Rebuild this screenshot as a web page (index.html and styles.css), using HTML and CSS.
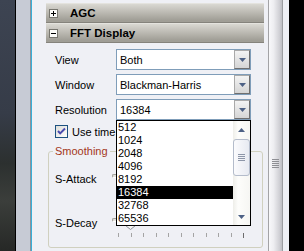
FILE: index.html
```html
<!DOCTYPE html>
<html lang="en">
<head>
    <meta charset="UTF-8">
    <title>FFT Display</title>
    <link rel="stylesheet" href="styles.css">
</head>
<body>
    <div class="screen">
        <div class="desktop"></div>
        <div class="frame"></div>

        <div class="panel">
            <div class="content">
                <div class="section">
                    <svg class="toggle" width="9" height="9" viewBox="0 0 9 9"><rect x=".5" y=".5" width="8" height="8" fill="#fbfbf9" stroke="#77766f"/><path d="M2 4.5h5M4.5 2v5" stroke="#000"/></svg>
                    AGC
                </div>
                <div class="section">
                    <svg class="toggle" width="9" height="9" viewBox="0 0 9 9"><rect x=".5" y=".5" width="8" height="8" fill="#fbfbf9" stroke="#77766f"/><path d="M2 4.5h5" stroke="#000"/></svg>
                    FFT Display
                </div>

                <div class="form">
                    <div class="row">
                        <label>View</label>
                        <div class="combo"><span>Both</span><span class="combo-btn"><svg width="7" height="4" viewBox="0 0 7 4"><path d="M0 0h7L3.5 4z" fill="#4d6185"/></svg></span></div>
                    </div>
                    <div class="row">
                        <label>Window</label>
                        <div class="combo"><span>Blackman-Harris</span><span class="combo-btn"><svg width="7" height="4" viewBox="0 0 7 4"><path d="M0 0h7L3.5 4z" fill="#4d6185"/></svg></span></div>
                    </div>
                    <div class="row">
                        <label>Resolution</label>
                        <div class="combo"><span>16384</span><span class="combo-btn"><svg width="7" height="4" viewBox="0 0 7 4"><path d="M0 0h7L3.5 4z" fill="#4d6185"/></svg></span></div>
                    </div>

                    <div class="check">
                        <svg width="13" height="13" viewBox="0 0 13 13"><defs><linearGradient id="cb" x1="0" y1="0" x2="1" y2="1"><stop offset="0" stop-color="#dcdcd7"/><stop offset="1" stop-color="#fff"/></linearGradient></defs><rect x=".5" y=".5" width="12" height="12" fill="url(#cb)" stroke="#1c5180"/><path d="M3 6l2.2 2.4L10 3.5" fill="none" stroke="#4a4aae" stroke-width="2"/></svg>
                        <span>Use time</span>
                    </div>

                    <fieldset class="group">
                        <legend>Smoothing</legend>
                        <div class="slider-row">
                            <label>S-Attack</label>
                            <div class="slider">
                                <div class="track"></div>
                                <svg class="thumb" style="left: 60px;" width="11" height="11" viewBox="0 0 11 11"><path d="M.5.5h10v6l-5 4-5-4z" fill="#f7f7f4" stroke="#8c919b"/></svg>
                                <div class="ticks"><i></i><i></i><i></i><i></i><i></i><i></i><i></i><i></i><i></i><i></i><i></i></div>
                            </div>
                        </div>
                        <div class="slider-row">
                            <label>S-Decay</label>
                            <div class="slider">
                                <div class="track"></div>
                                <svg class="thumb" style="left: 13px;" width="11" height="11" viewBox="0 0 11 11"><path d="M.5.5h10v6l-5 4-5-4z" fill="#f7f7f4" stroke="#8c919b"/></svg>
                                <div class="ticks"><i></i><i></i><i></i><i></i><i></i><i></i><i></i><i></i><i></i><i></i><i></i></div>
                            </div>
                        </div>
                    </fieldset>
                </div>

                <!-- open list of the Resolution combo -->
                <div class="dropdown">
                    <div class="options">
                        <div class="opt">512</div>
                        <div class="opt">1024</div>
                        <div class="opt">2048</div>
                        <div class="opt">4096</div>
                        <div class="opt">8192</div>
                        <div class="opt selected">16384</div>
                        <div class="opt">32768</div>
                        <div class="opt">65536</div>
                    </div>
                    <div class="list-scroll">
                        <div class="arrow-btn"><svg width="7" height="4" viewBox="0 0 7 4"><path d="M0 4h7L3.5 0z" fill="#4d6185"/></svg></div>
                        <div class="list-thumb"><i></i><i></i><i></i><i></i></div>
                        <div class="arrow-btn bottom"><svg width="7" height="4" viewBox="0 0 7 4"><path d="M0 0h7L3.5 4z" fill="#4d6185"/></svg></div>
                    </div>
                </div>
            </div>

            <div class="vscroll">
                <div class="grip"><i></i><i></i><i></i><i></i><i></i></div>
            </div>
        </div>

        <div class="outside"></div>
    </div>
</body>
</html>
```

FILE: styles.css
```css
* {
    box-sizing: border-box;
}
body {
    margin: 0;
    width: 304px;
    height: 251px;
    overflow: hidden;
    background-color: #000;
    font-family: 'Liberation Sans', Arial, sans-serif;
    font-size: 11px;
    color: #000;
}
.screen {
    display: flex;
    height: 251px;
}
.desktop {
    width: 15px;
    background: linear-gradient(#3d4452, #363c48 45%, #2c302f 65%, #3b3e3b 80%, #262826);
}
.frame {
    width: 16px;
    background-color: #c7cbd5;
    border-left: 1px solid #000;
    border-right: 1px solid #8d929c;
}
.panel {
    width: 258px;
    display: flex;
    background-color: #eff0f5;
    border-left: 1px solid #38afd8;
    padding-right: 6px;
}
.content {
    position: relative;
    width: 236px;
    padding: 3px 4px 0 14px;
}

/* collapsible section headers */
.section {
    display: flex;
    align-items: center;
    height: 20px;
    padding-left: 3px;
    border-top: 1px solid #e4e3de;
    border-bottom: 1px solid #85837c;
    background: linear-gradient(#d9d8d2, #c0beb7 40%, #a09e96 90%);
    font-weight: bold;
    font-size: 11.5px;
}
.toggle {
    margin-right: 12px;
}

/* form rows */
.form {
    padding-top: 6px;
}
.row {
    display: flex;
    align-items: center;
    height: 21px;
    margin-bottom: 4px;
    padding-left: 9px;
}
.row label {
    width: 61px;
}
.combo {
    display: flex;
    align-items: center;
    width: 135px;
    height: 21px;
    padding-left: 3px;
    border: 1px solid #7f9db9;
    background-color: #fff;
}
.combo-btn {
    display: flex;
    align-items: center;
    justify-content: center;
    width: 16px;
    height: 19px;
    margin-left: auto;
    border: 1px solid;
    border-color: #a9a9a9 #6f6f6f #6f6f6f #a9a9a9;
    background: linear-gradient(#f3f3f3, #d5d5d5);
}
.check {
    display: flex;
    align-items: center;
    gap: 4px;
    height: 13px;
    margin: 5px 0 0 9px;
    white-space: nowrap;
}

/* smoothing group */
.group {
    margin: 7px 1px 0 2px;
    padding: 0 0 0 4px;
    min-width: 0;
    border: 1px solid #d0d0bf;
    border-radius: 3px;
}
.group legend {
    padding: 0 2px;
    line-height: 13px;
    color: #a3361a;
}
.slider-row {
    display: flex;
    height: 44px;
    padding-left: 2px;
}
.slider-row:first-of-type {
    margin-top: 1px;
}
.slider-row label {
    width: 57px;
    margin-top: 14px;
    line-height: 13px;
}
.slider {
    position: relative;
    width: 136px;
}
.track {
    height: 4px;
    margin-top: 15px;
    border: 1px solid;
    border-color: #9f9e98 #fff #fff #9f9e98;
    border-radius: 2px;
    background-color: #e6e5e0;
}
.thumb {
    position: absolute;
    top: 16px;
}
.ticks {
    display: flex;
    justify-content: space-between;
    margin-top: 11px;
    padding: 0 4px 0 6px;
}
.ticks i {
    width: 1px;
    height: 4px;
    background-color: #a4a4a4;
}
.ticks i:last-child {
    height: 5px;
    background-color: #6c6c6c;
}

/* open dropdown list */
.dropdown {
    position: absolute;
    left: 84px;
    top: 120px;
    display: flex;
    width: 135px;
    height: 106px;
    border: 1px solid #000;
    background-color: #fff;
}
.options {
    flex: 1;
}
.opt {
    height: 13px;
    line-height: 13px;
    padding-left: 1px;
}
.opt.selected {
    background-color: #000;
    color: #fff;
}
.list-scroll {
    display: flex;
    flex-direction: column;
    width: 17px;
    background: linear-gradient(to right, #eeeee9, #fdfdfb 30%, #f6f6f3);
}
.arrow-btn {
    display: flex;
    align-items: center;
    justify-content: center;
    height: 17px;
}
.arrow-btn.bottom {
    margin-top: auto;
}
.list-thumb {
    display: flex;
    flex-direction: column;
    align-items: center;
    justify-content: center;
    gap: 1px;
    height: 37px;
    margin-top: 1px;
    border: 1px solid #b4bccb;
    border-radius: 3px;
    background: linear-gradient(to right, #fbfbfd, #e7eaf1);
}
.list-thumb i {
    width: 7px;
    height: 1px;
    background-color: #8d96a8;
}

/* outer panel scrollbar */
.vscroll {
    width: 15px;
    padding-top: 159px;
    border-left: 1px solid #a3a3a6;
    border-right: 1px solid #9c9da1;
    background: linear-gradient(to right, #f8f8fa, #eeeef1 35%, #d0d0d5 80%, #bebec3);
}
.grip {
    display: flex;
    flex-direction: column;
    gap: 1px;
    margin-left: 3px;
}
.grip i {
    width: 7px;
    height: 1px;
    background-color: #8e8f94;
}
.outside {
    flex: 1;
    background-color: #000;
}
```
